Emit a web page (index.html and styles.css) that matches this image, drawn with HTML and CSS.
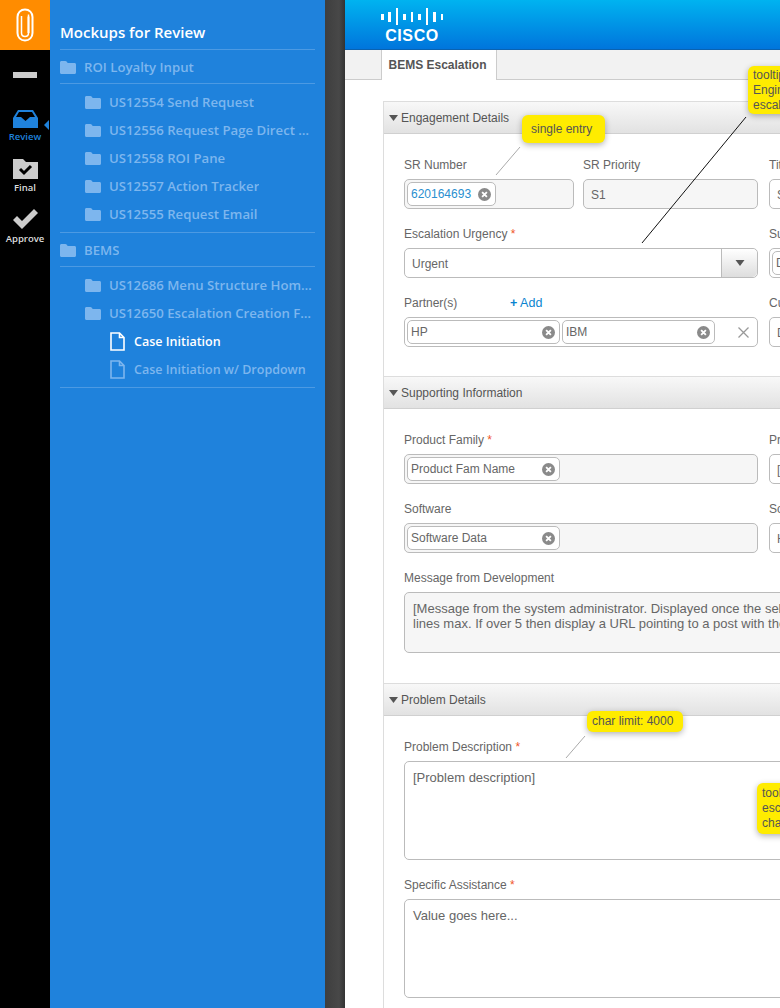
FILE: index.html
```html
<!DOCTYPE html>
<html lang="en">
<head>
  <meta charset="UTF-8">
  <title>BEMS Escalation</title>
  <link rel="stylesheet" href="styles.css">
</head>
<body>

  <svg class="defs" width="0" height="0">
    <symbol id="folder" viewBox="0 0 16 13">
      <path d="M0 1.5C0 .6.6 0 1.5 0h3.8c.6 0 1 .2 1.3.6L7.7 2h6.8c.9 0 1.5.6 1.5 1.5v8c0 .9-.6 1.5-1.5 1.5h-13C.6 13 0 12.400 0 11.500z"/>
    </symbol>
    <symbol id="file" viewBox="0 0 15 19">
      <path d="M1 1h8.500L14 5.500V18H1zM9.500 1v4.500H14" fill="none" stroke="currentColor" stroke-width="1.600"/>
    </symbol>
    <symbol id="clear" viewBox="0 0 12 12">
      <circle cx="6" cy="6" r="6" fill="#8a8a8a"/>
      <path d="M3.800 3.800l4.400 4.400M8.200 3.800l-4.400 4.400" stroke="#fff" stroke-width="1.700"/>
    </symbol>
    <symbol id="caret" viewBox="0 0 9 6">
      <path d="M0 0h9L4.500 6z" fill="#555"/>
    </symbol>
  </svg>

  <div class="app">

    <nav class="rail">
      <div class="rail-logo">
        <svg width="18" height="34" viewBox="0 0 18 34">
          <path d="M5.500 8v17c0 2 1.500 3.500 3.500 3.500s3.500-1.500 3.500-3.500V6.500" fill="none" stroke="#fff" stroke-width="1.500"/>
          <path d="M12.500 8.500V25M1.500 25c0 4.300 3.200 7.500 7.500 7.500s7.500-3.200 7.500-7.500V9C16.500 4.700 13.300 1.500 9 1.500S1.500 4.700 1.500 9v16" fill="none" stroke="#fff" stroke-width="2"/>
        </svg>
      </div>
      <div class="rail-minus"></div>
      <div class="rail-item active">
        <svg width="25" height="18" viewBox="0 0 25 18">
          <path d="M5 0h15l5 8v10H0V8zM6 2L3 7h5l4.500 4L17 7h5l-3-5z" fill="#1f82dc" fill-rule="evenodd"/>
        </svg>
        <span>Review</span>
      </div>
      <div class="rail-item final">
        <svg width="25" height="20" viewBox="0 0 25 20">
          <path d="M0 0h10l3 3h12v17H0z" fill="#ccc"/>
          <path d="M7 10l4 4 7-7" fill="none" stroke="#000" stroke-width="3"/>
        </svg>
        <span>Final</span>
      </div>
      <div class="rail-item approve">
        <svg width="25" height="20" viewBox="0 0 25 20">
          <path d="M0 11l4-4 5 5L21 0l4 4L9 20z" fill="#ccc"/>
        </svg>
        <span>Approve</span>
      </div>
    </nav>

    <aside class="tree">
      <h1 class="tree-title">Mockups for Review</h1>

      <div class="tree-group top">
        <div class="row"><svg class="ic"><use href="#folder"/></svg><span>ROI Loyalty Input</span></div>
      </div>
      <div class="tree-group sub">
        <div class="row"><svg class="ic"><use href="#folder"/></svg><span>US12554 Send Request</span></div>
        <div class="row"><svg class="ic"><use href="#folder"/></svg><span>US12556 Request Page Direct Access</span></div>
        <div class="row"><svg class="ic"><use href="#folder"/></svg><span>US12558 ROI Pane</span></div>
        <div class="row"><svg class="ic"><use href="#folder"/></svg><span>US12557 Action Tracker</span></div>
        <div class="row"><svg class="ic"><use href="#folder"/></svg><span>US12555 Request Email</span></div>
      </div>
      <div class="tree-group top">
        <div class="row"><svg class="ic"><use href="#folder"/></svg><span>BEMS</span></div>
      </div>
      <div class="tree-group sub">
        <div class="row"><svg class="ic"><use href="#folder"/></svg><span>US12686 Menu Structure Home Page</span></div>
        <div class="row"><svg class="ic"><use href="#folder"/></svg><span>US12650 Escalation Creation Form</span></div>
        <div class="row file current"><svg class="ic-file"><use href="#file"/></svg><span>Case Initiation</span></div>
        <div class="row file"><svg class="ic-file"><use href="#file"/></svg><span>Case Initiation w/ Dropdown</span></div>
      </div>
    </aside>

    <div class="gutter"></div>

    <main class="main">
      <header class="brand">
        <div class="logo">
          <div class="bars">
            <i class="b1"></i><i class="b2"></i><i class="b3"></i><i class="b1"></i><i class="b2"></i><i class="b1"></i><i class="b3"></i><i class="b2"></i><i class="b1"></i>
          </div>
          <div class="logo-word">CISCO</div>
        </div>
      </header>

      <div class="tabs">
        <div class="tab">BEMS Escalation</div>
      </div>

      <div class="content">

        <section class="panel">
          <h2 class="panel-head"><svg class="caret"><use href="#caret"/></svg>Engagement Details</h2>
          <div class="panel-body">
            <div class="grid">
              <div class="pair">
                <div class="field">
                  <label>SR Number</label>
                  <div class="box off"><span class="chip small"><a>620164693</a><svg class="x"><use href="#clear"/></svg></span></div>
                </div>
                <div class="field">
                  <label>SR Priority</label>
                  <div class="box off text">S1</div>
                </div>
              </div>
              <div class="field">
                <label>Title</label>
                <div class="box text">S</div>
              </div>

              <div class="field">
                <label>Escalation Urgency <b>*</b></label>
                <div class="box select text">Urgent<span class="drop"><svg class="caret-lg"><use href="#caret"/></svg></span></div>
              </div>
              <div class="field">
                <label>Subject</label>
                <div class="box"><span class="chip">D</span></div>
              </div>

              <div class="field">
                <label class="with-add"><span>Partner(s)</span><a class="add"><em>+</em> Add</a></label>
                <div class="box">
                  <span class="chip">HP<svg class="x"><use href="#clear"/></svg></span>
                  <span class="chip">IBM<svg class="x"><use href="#clear"/></svg></span>
                  <svg class="clear-all" width="11" height="11" viewBox="0 0 11 11"><path d="M.5.500l10 10M10.500.500l-10 10" stroke="#999" stroke-width="1.300"/></svg>
                </div>
              </div>
              <div class="field">
                <label>Customer</label>
                <div class="box text">D</div>
              </div>
            </div>
          </div>
        </section>

        <section class="panel">
          <h2 class="panel-head"><svg class="caret"><use href="#caret"/></svg>Supporting Information</h2>
          <div class="panel-body">
            <div class="grid">
              <div class="field">
                <label>Product Family <b>*</b></label>
                <div class="box off"><span class="chip">Product Fam Name<svg class="x"><use href="#clear"/></svg></span></div>
              </div>
              <div class="field">
                <label>Product</label>
                <div class="box text">[D</div>
              </div>

              <div class="field">
                <label>Software</label>
                <div class="box off"><span class="chip">Software Data<svg class="x"><use href="#clear"/></svg></span></div>
              </div>
              <div class="field">
                <label>Software Version</label>
                <div class="box text">H</div>
              </div>

              <div class="field wide">
                <label>Message from Development</label>
                <div class="area off msg">[Message from the system administrator. Displayed once the selection is made. 5<br>lines max. If over 5 then display a URL pointing to a post with the details.]</div>
              </div>
            </div>
          </div>
        </section>

        <section class="panel">
          <h2 class="panel-head"><svg class="caret"><use href="#caret"/></svg>Problem Details</h2>
          <div class="panel-body">
            <div class="grid">
              <div class="field wide">
                <label>Problem Description <b>*</b></label>
                <div class="area tall">[Problem description]</div>
              </div>
              <div class="field wide">
                <label>Specific Assistance <b>*</b></label>
                <div class="area tall">Value goes here...</div>
              </div>
            </div>
          </div>
        </section>

        <div class="note note-entry">single entry</div>
        <div class="note note-tip">tooltip text<br>Engineering<br>escalation</div>
        <div class="note note-limit">char limit: 4000</div>
        <div class="note note-esc">tooltip<br>escalation<br>change</div>

        <svg class="leaders" width="435" height="928" viewBox="345 80 435 928">
          <path d="M746 117L642 243" stroke="#111" fill="none"/>
          <path d="M520 147l-24 28M585 736l-19 22" stroke="#aaa" fill="none"/>
        </svg>
      </div>
    </main>

  </div>

</body>
</html>
```

FILE: styles.css
```css
* {
  box-sizing: border-box;
}
body {
  margin: 0;
  font-family: "Liberation Sans", Arial, sans-serif;
  font-size: 12px;
  color: #666;
  background: #fff;
}
.defs {
  position: absolute;
}
.app {
  display: flex;
  width: 780px;
  height: 1008px;
  overflow: hidden;
}

/* left black rail */
.rail {
  flex: 0 0 50px;
  background: #000;
  display: flex;
  flex-direction: column;
  align-items: center;
  font-family: "Open Sans", sans-serif;
  font-size: 9.500px;
  font-weight: 600;
  color: #ddd;
}
.rail-logo {
  align-self: stretch;
  height: 50px;
  background: #ff8c00;
  display: flex;
  justify-content: center;
  align-items: center;
}
.rail-minus {
  width: 24px;
  height: 6px;
  margin-top: 22px;
  background: #ccc;
}
.rail-item {
  position: relative;
  display: flex;
  flex-direction: column;
  align-items: center;
  margin-top: 32px;
  line-height: 14px;
}
.rail-item span {
  margin-top: 2px;
}
.rail-item.active {
  color: #1f82dc;
}
.rail-item.active::after {
  content: "";
  position: absolute;
  right: -8px;
  top: 10px;
  border: 5px solid transparent;
  border-right-color: #1f82dc;
  border-left: 0;
}
.rail-item.final {
  margin-top: 15px;
}
.rail-item.approve {
  margin-top: 14px;
}
.rail-item.approve span {
  margin-top: 3px;
}

/* blue tree */
.tree {
  flex: 0 0 275px;
  min-width: 0;
  background: #1f82dc;
  padding: 0 10px;
  font-family: "Open Sans", sans-serif;
  font-size: 13.200px;
  font-weight: 600;
  color: #7db6ee;
}
.tree-title {
  margin: 0;
  height: 50px;
  padding-top: 22px;
  font-size: 15px;
  line-height: 20px;
  font-weight: 600;
  color: #fff;
  border-bottom: 1px solid #4c9ae3;
}
.tree-group {
  border-bottom: 1px solid #4c9ae3;
}
.tree-group.top {
  height: 34px;
  padding-top: 3px;
}
.tree-group.sub {
  padding: 4px 0 4px 25px;
}
.row {
  display: flex;
  align-items: center;
  height: 28px;
  white-space: nowrap;
}
.row span {
  overflow: hidden;
  text-overflow: ellipsis;
}
.ic {
  flex: none;
  width: 16px;
  height: 13px;
  margin-right: 8px;
  fill: #7db6ee;
}
.row.file {
  padding-left: 25px;
  font-size: 12.500px;
}
.ic-file {
  flex: none;
  width: 15px;
  height: 19px;
  margin-right: 9px;
  color: #7db6ee;
}
.row.current {
  color: #fff;
}
.row.current .ic-file {
  color: #fff;
}

.gutter {
  flex: 0 0 20px;
  background: linear-gradient(to right, #3e3e3e, #484848 70%, #333);
}

/* main form */
.main {
  flex: 0 0 435px;
  width: 435px;
  overflow: hidden;
}
.brand {
  height: 50px;
  padding: 8px 0 0 36px;
  background: linear-gradient(to bottom, #00b3f0, #0075dc);
  border-bottom: 1px solid #0a62b0;
}
.logo {
  width: 62px;
  color: #fff;
}
.bars {
  display: flex;
  justify-content: space-between;
  align-items: center;
  height: 17px;
}
.bars i {
  width: 2.500px;
  background: #fff;
}
.bars .b1 {
  height: 6px;
}
.bars .b2 {
  height: 10px;
}
.bars .b3 {
  height: 17px;
}
.logo-word {
  margin-top: 3px;
  text-align: center;
  font-size: 16px;
  line-height: 15px;
  font-weight: 700;
  letter-spacing: .6px;
}
.tabs {
  height: 30px;
  padding-left: 36px;
  background: #f2f2f2;
  border-bottom: 1px solid #ccc;
}
.tab {
  width: 116px;
  height: 30px;
  padding: 8px 3px 0 0;
  background: #fff;
  border: 1px solid #ccc;
  border-width: 0 1px;
  text-align: center;
  font-weight: 700;
  font-size: 12px;
  color: #555;
}
.content {
  position: relative;
  padding: 21px 0 0 38px;
}
.panel {
  width: 800px;
  border-left: 1px solid #ddd;
}
.panel-head {
  margin: 0;
  height: 33px;
  padding-left: 5px;
  display: flex;
  align-items: center;
  font-size: 12px;
  font-weight: 400;
  color: #555;
  background: linear-gradient(to bottom, #f8f8f8, #e2e2e2);
  border-top: 1px solid #ddd;
  border-bottom: 1px solid #d0d0d0;
}
.caret {
  width: 9px;
  height: 6px;
  margin-right: 3px;
}
.panel-body {
  padding: 22px 0 29px 20px;
}
.grid {
  display: grid;
  grid-template-columns: 354px 354px;
  column-gap: 11px;
  row-gap: 16px;
}
.pair {
  display: grid;
  grid-template-columns: 170px 175px;
  column-gap: 9px;
}
.wide {
  grid-column: 1 / 3;
}
.field label {
  display: block;
  height: 16px;
  line-height: 18px;
  margin-bottom: 7px;
}
.field label b {
  font-weight: 400;
  color: #f0562a;
}
.field label.with-add {
  display: flex;
}
.with-add span {
  width: 106px;
}
.add {
  font-size: 12.500px;
  color: #0a84d0;
}
.add em {
  font-style: normal;
  font-weight: 700;
}
.box {
  position: relative;
  height: 30px;
  display: flex;
  align-items: center;
  gap: 2px;
  padding: 0 2px;
  background: #fff;
  border: 1px solid #bbb;
  border-radius: 5px;
}
.box.off, .area.off {
  background: #f6f6f6;
}
.box.text {
  padding: 2px 0 0 7px;
}
.chip {
  height: 24px;
  width: 153px;
  display: flex;
  align-items: center;
  justify-content: space-between;
  padding: 0 4px 0 3px;
  background: #fff;
  border: 1px solid #bbb;
  border-radius: 5px;
}
.chip.small {
  width: 89px;
}
.chip a {
  color: #2a8fd0;
}
.x {
  width: 13px;
  height: 13px;
}
.clear-all {
  margin-left: 21px;
}
.drop {
  position: absolute;
  right: 0;
  top: 0;
  width: 36px;
  height: 28px;
  display: flex;
  align-items: center;
  justify-content: center;
  background: linear-gradient(to bottom, #fff, #ddd);
  border-left: 1px solid #bbb;
  border-radius: 0 5px 5px 0;
}
.caret-lg {
  width: 10px;
  height: 6px;
}
.area {
  padding: 8px;
  font-size: 13px;
  line-height: 15px;
  background: #fff;
  border: 1px solid #bbb;
  border-radius: 5px;
  white-space: nowrap;
}
.msg {
  height: 61px;
  margin-bottom: 1px;
}
.tall {
  height: 99px;
}

/* yellow review notes drawn over the form */
.note {
  position: absolute;
  background: #ffec00;
  border-radius: 6px;
  box-shadow: 0 2px 6px rgba(0, 0, 0, .3);
  color: #555;
  line-height: 15px;
  white-space: nowrap;
}
.note-entry {
  left: 177px;
  top: 35px;
  width: 83px;
  height: 28px;
  padding: 7px 9px;
}
.note-tip {
  left: 403px;
  top: -14px;
  width: 90px;
  height: 48px;
  padding: 2px 5px;
}
.note-limit {
  left: 242px;
  top: 631px;
  width: 96px;
  height: 21px;
  padding: 3px 5px;
}
.note-esc {
  left: 412px;
  top: 703px;
  width: 80px;
  height: 51px;
  padding: 3px 5px;
}
.leaders {
  position: absolute;
  left: 0;
  top: 0;
  pointer-events: none;
}
```
